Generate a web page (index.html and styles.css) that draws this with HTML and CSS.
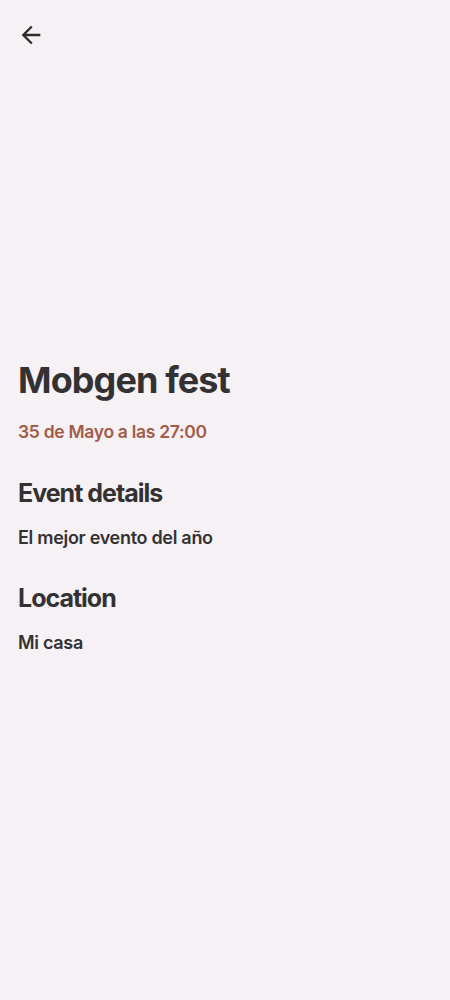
FILE: index.html
```html
<!DOCTYPE html>
<html>
<head>
<meta charset="utf-8">
<link rel="stylesheet" href="styles.css">
</head>
<body>
<div class="screen">
  <header class="topbar">
    <button class="back" aria-label="Back">
      <svg viewBox="0 0 24 24" width="28" height="28"><path d="M20 11H7.83l5.59-5.59L12 4l-8 8 8 8 1.41-1.41L7.83 13H20v-2z" fill="#2b2b2b"/></svg>
    </button>
  </header>
  <div class="hero"></div>
  <main class="content">
    <h1 class="title">Mobgen fest</h1>
    <p class="date">35 de Mayo a las 27:00</p>
    <h2 class="section">Event details</h2>
    <p class="body">El mejor evento del año</p>
    <h2 class="section">Location</h2>
    <p class="body">Mi casa</p>
  </main>
</div>
</body>
</html>
```
FILE: styles.css
```css
html, body {
  margin: 0;
  padding: 0;
  background: #f6f1f5;
}
.screen {
  width: 450px;
  height: 1000px;
  font-family: Inter, "Noto Sans", sans-serif;
  color: #333132;
}
.topbar {
  height: 70px;
  display: flex;
  align-items: flex-start;
  padding: 21px 0 0 17px;
  box-sizing: border-box;
}
.back {
  border: 0;
  background: none;
  padding: 0;
  width: 28px;
  height: 28px;
  display: flex;
}
.hero {
  height: 284px;
}
.content {
  padding: 0 18px;
  display: flex;
  flex-direction: column;
}
.title {
  margin: 0;
  font-size: 36px;
  font-weight: 700;
  letter-spacing: -0.9px;
  line-height: 52px;
}
.date {
  margin: 13px 0 0;
  font-size: 17.5px;
  font-weight: 600;
  color: #a25c48;
  line-height: 26px;
  letter-spacing: -0.3px;
}
.section {
  margin: 31px 0 0;
  font-size: 25px;
  font-weight: 700;
  letter-spacing: -1px;
  line-height: 34px;
}
.body {
  margin: 15px 0 0;
  font-size: 18px;
  font-weight: 600;
  line-height: 26px;
  letter-spacing: -0.3px;
}
.body + .section {
  margin-top: 30px;
}
```
